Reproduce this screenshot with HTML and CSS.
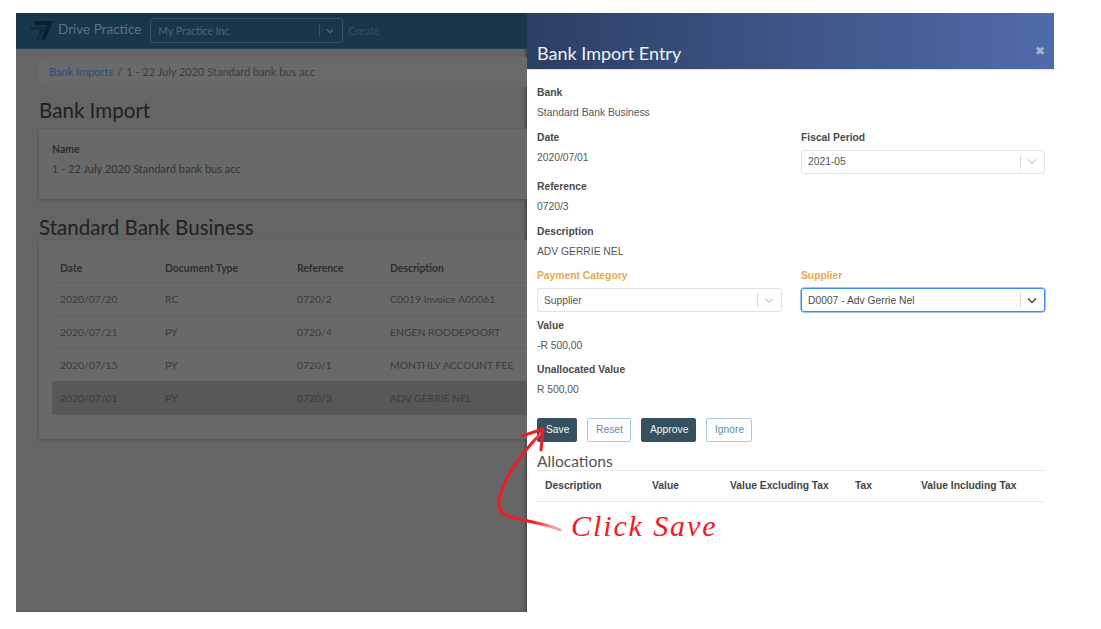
FILE: index.html
```html
<!DOCTYPE html>
<html lang="en">
<head>
    <meta charset="UTF-8">
    <title>Bank Import Entry</title>
    <link rel="stylesheet" href="styles.css">
</head>
<body>
    <div class="frame">
        <div class="page">
            <nav class="navbar">
                <svg class="logo" width="24" height="20" viewBox="0 0 24 20">
                    <path d="M0 6H15L9 19H6L10 9H1Z" fill="#122b3b"/>
                    <path d="M4 0H23L15 19H11L17 4H4Z" fill="#0c1f2c"/>
                </svg>
                <span class="brand">Drive Practice</span>
                <div class="nav-select">
                    <span class="nav-select-value">My Practice Inc.</span>
                    <span class="nav-sep"></span>
                    <svg width="8" height="6" viewBox="0 0 8 6"><path d="M1 1.5L4 4.5L7 1.5" fill="none" stroke="#4f6a79" stroke-width="1.5"/></svg>
                </div>
                <span class="nav-create">Create</span>
            </nav>
            <div class="content">
                <div class="breadcrumb">
                    <span class="crumb-link">Bank Imports</span>
                    <span class="crumb-sep">/</span>
                    <span>1 - 22 July 2020 Standard bank bus acc</span>
                </div>
                <h2 class="page-title">Bank Import</h2>
                <div class="card card-name">
                    <div class="card-label">Name</div>
                    <div class="card-value">1 - 22 July 2020 Standard bank bus acc</div>
                </div>
                <h2 class="page-title page-title-second">Standard Bank Business</h2>
                <div class="card card-table">
                    <table class="import-table">
                        <thead>
                            <tr><th class="col-date">Date</th><th class="col-type">Document Type</th><th class="col-ref">Reference</th><th>Description</th></tr>
                        </thead>
                        <tbody>
                            <tr><td>2020/07/20</td><td>RC</td><td>0720/2</td><td>C0019 invoice A00061</td></tr>
                            <tr><td>2020/07/21</td><td>PY</td><td>0720/4</td><td>ENGEN ROODEPOORT</td></tr>
                            <tr><td>2020/07/15</td><td>PY</td><td>0720/1</td><td>MONTHLY ACCOUNT FEE</td></tr>
                            <tr class="row-selected"><td>2020/07/01</td><td>PY</td><td>0720/3</td><td>ADV GERRIE NEL</td></tr>
                        </tbody>
                    </table>
                </div>
            </div>
        </div>

        <aside class="panel">
            <header class="panel-header">
                <h3 class="panel-title">Bank Import Entry</h3>
                <span class="panel-close">&#10006;</span>
            </header>
            <div class="panel-body">
                <div class="field">
                    <label class="field-label">Bank</label>
                    <div class="field-value">Standard Bank Business</div>
                </div>
                <div class="field-row">
                    <div class="field">
                        <label class="field-label">Date</label>
                        <div class="field-value">2020/07/01</div>
                    </div>
                    <div class="field">
                        <label class="field-label">Fiscal Period</label>
                        <div class="select">
                            <span class="select-value">2021-05</span>
                            <span class="select-sep"></span>
                            <svg width="10" height="7" viewBox="0 0 10 7"><path d="M1 1.5L5 5.5L9 1.5" fill="none" stroke="#cccccc" stroke-width="1.2"/></svg>
                        </div>
                    </div>
                </div>
                <div class="field">
                    <label class="field-label">Reference</label>
                    <div class="field-value">0720/3</div>
                </div>
                <div class="field">
                    <label class="field-label">Description</label>
                    <div class="field-value">ADV GERRIE NEL</div>
                </div>
                <div class="field-row">
                    <div class="field">
                        <label class="field-label field-label-warn">Payment Category</label>
                        <div class="select">
                            <span class="select-value">Supplier</span>
                            <span class="select-sep"></span>
                            <svg width="10" height="7" viewBox="0 0 10 7"><path d="M1 1.5L5 5.5L9 1.5" fill="none" stroke="#cccccc" stroke-width="1.2"/></svg>
                        </div>
                    </div>
                    <div class="field">
                        <label class="field-label field-label-warn">Supplier</label>
                        <div class="select select-focus">
                            <span class="select-value">D0007 - Adv Gerrie Nel</span>
                            <span class="select-sep"></span>
                            <svg width="10" height="7" viewBox="0 0 10 7"><path d="M1 1.5L5 5.5L9 1.5" fill="none" stroke="#444444" stroke-width="1.4"/></svg>
                        </div>
                    </div>
                </div>
                <div class="field">
                    <label class="field-label">Value</label>
                    <div class="field-value">-R 500,00</div>
                </div>
                <div class="field">
                    <label class="field-label">Unallocated Value</label>
                    <div class="field-value">R 500,00</div>
                </div>
                <div class="actions">
                    <button class="btn btn-dark">Save</button>
                    <button class="btn btn-outline">Reset</button>
                    <button class="btn btn-dark btn-approve">Approve</button>
                    <button class="btn btn-outline btn-ignore">Ignore</button>
                </div>
                <h4 class="section-title">Allocations</h4>
                <table class="alloc-table">
                    <thead>
                        <tr>
                            <th class="alloc-desc">Description</th>
                            <th class="alloc-value">Value</th>
                            <th class="alloc-excl">Value Excluding Tax</th>
                            <th class="alloc-tax">Tax</th>
                            <th>Value Including Tax</th>
                        </tr>
                    </thead>
                </table>
            </div>
        </aside>

        <!-- red note drawn on top of the screenshot -->
        <svg class="note-arrow" width="80" height="120" viewBox="0 0 80 120">
            <defs>
                <linearGradient id="tail" x1="0" y1="0" x2="1" y2="0">
                    <stop offset="0.55" stop-color="#ee1c25"/>
                    <stop offset="0.9" stop-color="#f5a3a3"/>
                </linearGradient>
            </defs>
            <path d="M45 16C28 34 8 58 3 83C1 97 12 100 27 103C40 106 54 108 64 113" fill="none" stroke="url(#tail)" stroke-width="3" stroke-linecap="round"/>
            <path d="M26 19L47 12L45 33" fill="none" stroke="#ee1c25" stroke-width="3" stroke-linecap="round" stroke-linejoin="round"/>
        </svg>
        <span class="note-text">Click Save</span>
    </div>
</body>
</html>
```

FILE: styles.css
```css
* {
    box-sizing: border-box;
}
body {
    margin: 0;
    padding: 13px 47px 17px 16px;
    background-color: #fff;
}
.frame {
    position: relative;
    display: flex;
    width: 1038px;
    height: 599px;
}

/* dimmed page behind the panel */
.page {
    width: 511px;
    flex: none;
    background-color: #656565;
    font-family: "Lato", sans-serif;
    color: #2e2e2e;
    overflow: hidden;
    box-shadow: inset -2px 0 2px rgba(0,0,0,0.25);
}
.navbar {
    display: flex;
    align-items: center;
    height: 36px;
    padding-left: 14px;
    background-color: #17384a;
    border-bottom: 1px solid #1d4155;
}
.logo {
    flex: none;
    margin-right: 4px;
}
.brand {
    margin: 0 9px 3px 0;
    font-size: 13.5px;
    color: #5f7480;
    white-space: nowrap;
}
.nav-select {
    display: flex;
    align-items: center;
    width: 193px;
    height: 25px;
    padding: 0 8px 0 7px;
    border: 1px solid #375362;
    border-radius: 3px;
    font-size: 10.5px;
    color: #4f6977;
}
.nav-select-value {
    flex: 1;
}
.nav-sep {
    width: 1px;
    height: 13px;
    background-color: #375362;
    margin-right: 6px;
}
.nav-create {
    margin-left: 5px;
    font-size: 10.5px;
    color: #37525f;
}
.content {
    padding: 8px 0 0 23px;
}
.breadcrumb {
    display: flex;
    align-items: center;
    height: 30px;
    padding: 0 0 2px 10px;
    background-color: #6a6a6a;
    border-radius: 2px;
    font-size: 11px;
    color: #3a3a3a;
}
.crumb-link {
    color: #2b4a7e;
}
.crumb-sep {
    margin: 0 4px;
}
.page-title {
    margin: 11px 0 0;
    height: 24px;
    font-size: 20.6px;
    font-weight: 400;
    line-height: 24px;
    color: #212121;
}
.page-title-second {
    margin-top: 16px;
}
.card {
    margin-top: 7px;
    background-color: #696969;
    box-shadow: 0 1px 3px rgba(0,0,0,0.2);
}
.card-name {
    height: 70px;
    padding: 13px;
}
.card-label {
    font-size: 10.5px;
    font-weight: 700;
    line-height: 14px;
}
.card-value {
    margin-top: 6px;
    font-size: 11px;
    line-height: 14px;
    color: #333;
}
.card-table {
    height: 199px;
    margin-top: 1px;
    padding: 12px 0 0 13px;
}
.import-table {
    width: 475px;
    border-collapse: collapse;
    table-layout: fixed;
    font-size: 10.4px;
    color: #3a3a3a;
}
.import-table th {
    height: 30px;
    padding: 0 8px;
    text-align: left;
    font-weight: 700;
    color: #2e2e2e;
    border-top: 1px solid #666;
}
.import-table td {
    height: 33px;
    padding: 0 8px;
    border-top: 1px solid #616161;
    white-space: nowrap;
}
.col-date {
    width: 105px;
}
.col-type {
    width: 132px;
}
.col-ref {
    width: 93px;
}
.row-selected td {
    background-color: #585858;
    border-top-color: #585858;
}

/* slide-in panel */
.panel {
    width: 527px;
    flex: none;
    background-color: #fff;
    font-family: "Liberation Sans", Arial, sans-serif;
    font-size: 10.3px;
    color: #444;
}
.panel-header {
    display: flex;
    justify-content: space-between;
    align-items: flex-start;
    height: 57px;
    padding: 0 9px 0 10px;
    background: linear-gradient(to right, #2c3f63, #4f6baa);
    border-bottom: 1px solid #dde4f0;
}
.panel-title {
    margin: 28px 0 0;
    font-family: "Lato", sans-serif;
    font-size: 18px;
    font-weight: 400;
    line-height: 24px;
    color: #eef1f6;
}
.panel-close {
    margin-top: 30px;
    font-size: 12px;
    line-height: 16px;
    color: #a9b5cf;
}
.panel-body {
    padding: 14.4px 9px 0 10px;
}
.field {
    margin-bottom: 7.5px;
}
.field-label {
    display: block;
    height: 17px;
    font-weight: 700;
    line-height: 17px;
    color: #4a4a4a;
}
.field-label-warn {
    color: #e8a94d;
}
.field-value {
    margin-top: 3px;
    height: 17px;
    line-height: 17px;
    color: #555;
}
.field-row {
    display: grid;
    grid-template-columns: 245px 244px;
    column-gap: 19px;
}
.field-row .field {
    margin-bottom: 4.4px;
}
.select {
    display: flex;
    align-items: center;
    height: 24px;
    margin-top: 4.1px;
    padding: 0 7px 0 6px;
    border: 1px solid #e3e3e3;
    border-radius: 3px;
    color: #555;
}
.select-value {
    flex: 1;
}
.select-sep {
    width: 1px;
    height: 14px;
    margin-right: 6px;
    background-color: #d8d8d8;
}
.select-focus {
    border-color: #3b8aec;
    box-shadow: 0 0 0 0.5px #3b8aec;
    color: #4a4a4a;
}
.actions {
    display: flex;
    gap: 10px;
    margin-top: 19.6px;
}
.btn {
    height: 24px;
    padding: 0 8px;
    border-radius: 2px;
    border: 1px solid #35505f;
    font-family: "Liberation Sans", Arial, sans-serif;
    font-size: 10.3px;
}
.btn-dark {
    width: 40px;
    background-color: #35505f;
    color: #f2f5f6;
}
.btn-outline {
    width: 44px;
    background-color: #fff;
    border-color: #a9cadb;
    color: #5d8ea8;
}
.btn-approve {
    width: 55px;
}
.btn-ignore {
    width: 46px;
}
.section-title {
    margin: 10px 0 0;
    height: 18px;
    font-family: "Lato", sans-serif;
    font-size: 15.6px;
    font-weight: 400;
    line-height: 18px;
    color: #555;
}
.alloc-table {
    width: 508px;
    border-collapse: collapse;
    table-layout: fixed;
    border-top: 1px solid #e6eaee;
    border-bottom: 1px solid #e6e6e6;
}
.alloc-table th {
    height: 31px;
    padding: 0 8px;
    text-align: left;
    font-size: 10.3px;
    font-weight: 700;
    color: #444;
}
.alloc-desc {
    width: 107px;
}
.alloc-value {
    width: 78px;
}
.alloc-excl {
    width: 125px;
}
.alloc-tax {
    width: 66px;
}
.note-arrow {
    position: absolute;
    left: 480px;
    top: 404px;
}
.note-text {
    position: absolute;
    left: 555px;
    top: 496px;
    font-family: "Liberation Serif", serif;
    font-style: italic;
    font-size: 30px;
    line-height: 34px;
    letter-spacing: 1.9px;
    color: #ee1c25;
    white-space: nowrap;
}
```
